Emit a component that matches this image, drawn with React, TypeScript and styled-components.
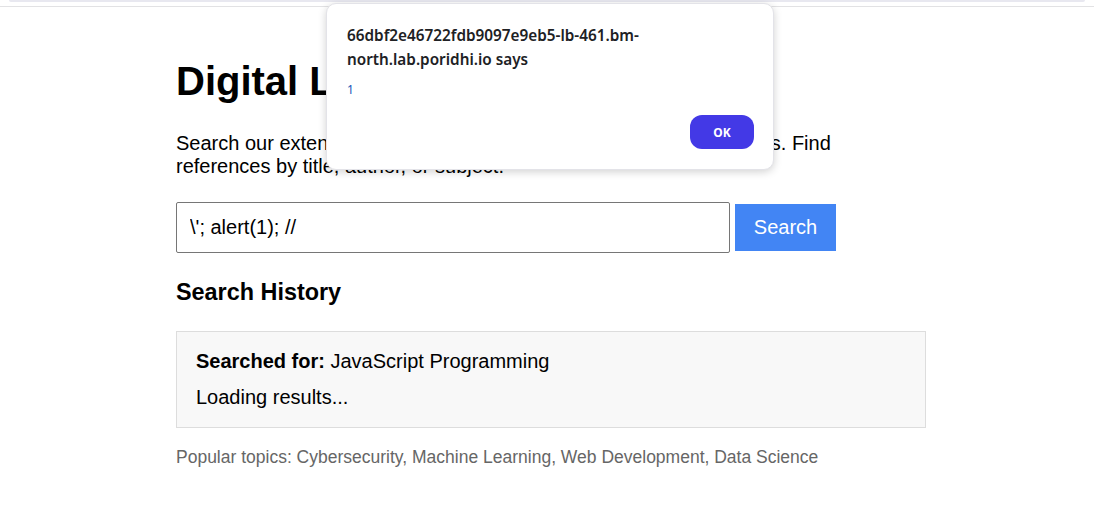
import React from "react";
import styled, { createGlobalStyle } from "styled-components";

const GlobalStyle = createGlobalStyle`
  html, body { margin: 0; padding: 0; background: #ffffff; }
  body { font-family: "Liberation Sans", Arial, sans-serif; color: #000; }
  * { box-sizing: border-box; }
`;

const TopEdge = styled.div`
  height: 7px;
  border-bottom: 1px solid #e2e2e4;
  &::before {
    content: "";
    display: block;
    height: 2px;
    margin: 0 9px 0 9px;
    background: #e8e8f0;
    border-radius: 0 0 4px 4px;
  }
`;

const Page = styled.main`
  width: 750px;
  margin-left: 176px;
  padding-bottom: 40px;
`;

const Title = styled.h1`
  margin: 51px 0 0;
  font-size: 40px;
  line-height: 46px;
  font-weight: 700;
`;

const Intro = styled.p`
  margin: 28px 0 0;
  font-size: 20px;
  line-height: 23px;
`;

const SearchRow = styled.form`
  display: flex;
  align-items: center;
  gap: 5px;
  margin-top: 24px;
`;

const SearchInput = styled.input`
  width: 554px;
  height: 51px;
  padding: 0 13px;
  border: 1px solid #767676;
  border-radius: 2px;
  font-family: "Liberation Sans", Arial, sans-serif;
  font-size: 20px;
  color: #000;
  outline: none;
`;

const SearchButton = styled.button`
  width: 101px;
  height: 47px;
  border: none;
  background: #4285f4;
  color: #fff;
  font-family: "Liberation Sans", Arial, sans-serif;
  font-size: 20px;
  padding: 0;
`;

const SectionTitle = styled.h3`
  margin: 26px 0 0;
  font-size: 23.4px;
  line-height: 27px;
  font-weight: 700;
`;

const HistoryBox = styled.div`
  margin-top: 25px;
  background: #f8f8f8;
  border: 1px solid #dddddd;
  padding: 18px 19px;
  display: flex;
  flex-direction: column;
  gap: 13px;
`;

const HistoryLine = styled.p`
  margin: 0;
  font-size: 20px;
  line-height: 23px;
  & strong { font-weight: 700; }
`;

const Topics = styled.p`
  margin: 19px 0 0;
  font-size: 17.5px;
  line-height: 21px;
  color: #666666;
`;

const Dialog = styled.div`
  position: absolute;
  left: 326px;
  top: 3px;
  width: 448px;
  height: 167px;
  background: #ffffff;
  border: 1px solid #e3e3e8;
  border-radius: 10px;
  box-shadow: 0 2px 8px rgba(0, 0, 0, 0.18);
  padding: 19px 19px 0 20px;
  font-family: "Noto Sans", "Open Sans", sans-serif;
`;

const DialogTitle = styled.div`
  width: 340px;
  font-size: 15.3px;
  line-height: 24px;
  font-weight: 600;
  color: #202124;
`;

const DialogMessage = styled.div`
  margin-top: 11px;
  font-size: 12px;
  line-height: 16px;
  color: #1a56b8;
`;

const DialogActions = styled.div`
  display: flex;
  justify-content: flex-end;
  margin-top: 17px;
`;

const OkButton = styled.button`
  width: 64px;
  height: 34px;
  border: none;
  border-radius: 12px;
  background: #4339e6;
  color: #ffffff;
  font-family: "Noto Sans", "Open Sans", sans-serif;
  font-size: 12px;
  font-weight: 700;
  padding: 0;
`;

export default function App() {
  return (
    <>
      <GlobalStyle />
      <TopEdge />
      <Page>
        <Title>Digital Library Search</Title>
        <Intro>
          Search our extensive library of books, journals, and research papers. Find
          references by title, author, or subject.
        </Intro>
        <SearchRow onSubmit={(e) => e.preventDefault()}>
          <SearchInput defaultValue={"\\'; alert(1); //"} />
          <SearchButton type="submit">Search</SearchButton>
        </SearchRow>
        <SectionTitle>Search History</SectionTitle>
        <HistoryBox>
          <HistoryLine>
            <strong>Searched for:</strong> JavaScript Programming
          </HistoryLine>
          <HistoryLine>Loading results...</HistoryLine>
        </HistoryBox>
        <Topics>
          Popular topics: Cybersecurity, Machine Learning, Web Development, Data Science
        </Topics>
      </Page>
      <Dialog role="alertdialog">
        <DialogTitle>66dbf2e46722fdb9097e9eb5-lb-461.bm-north.lab.poridhi.io says</DialogTitle>
        <DialogMessage>1</DialogMessage>
        <DialogActions>
          <OkButton>OK</OkButton>
        </DialogActions>
      </Dialog>
    </>
  );
}
